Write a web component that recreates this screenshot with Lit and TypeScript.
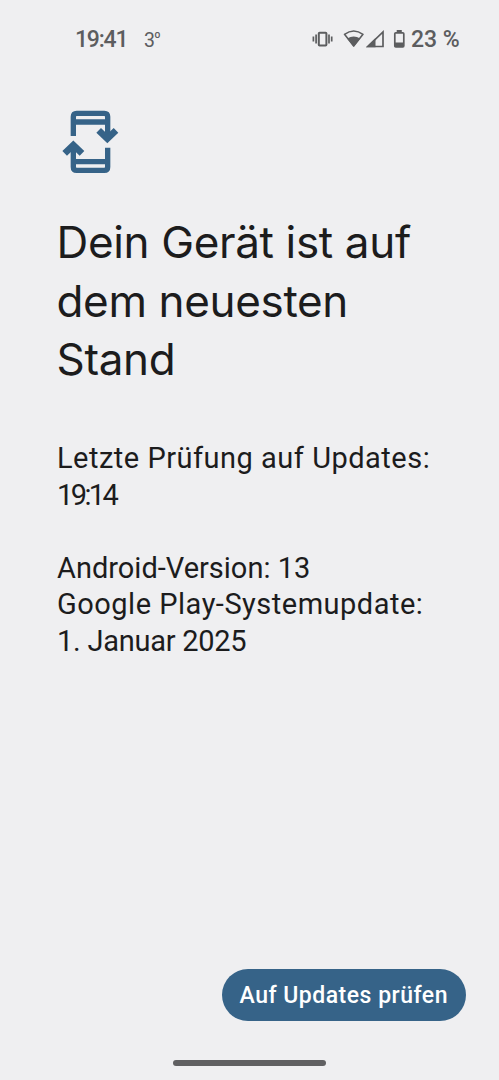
import { LitElement, html, css } from "lit";
import { customElement } from "lit/decorators.js";

@customElement("status-bar")
class StatusBar extends LitElement {
  static styles = css`
    :host {
      display: flex;
      align-items: center;
      height: 78px;
      box-sizing: border-box;
      padding: 2px 38px 0 75px;
      color: #5c5d5f;
      font-family: Roboto, sans-serif;
    }
    .clock { font-size: 23px; font-weight: 500; line-height: 28px; width: 69px; white-space: nowrap; letter-spacing: -1.2px; }
    .temp { font-size: 19.5px; font-weight: 400; line-height: 28px; flex: 1; padding-top: 1px; letter-spacing: -1px; }
    .temp sup { font-size: 15px; line-height: 0; vertical-align: 4px; }
    .icons { display: block; width: 96px; height: 28px; margin-top: -2px; }
    .battery { font-size: 23px; font-weight: 500; line-height: 28px; width: 50px; margin-left: 4px; white-space: nowrap; }
  `;
  render() {
    return html`
      <span class="clock">19:41</span>
      <span class="temp">3<sup>º</sup></span>
      <svg class="icons" viewBox="311 25 96 28" fill="none" stroke="#5c5d5f">
        <rect x="318.8" y="32.8" width="7.6" height="12.8" rx=".8" stroke-width="2" />
        <path d="M313.4 36.5v5M316.1 34.5v9M331.7 36.5v5M329 34.5v9" stroke-width="1.7" />
        <path d="M344.5 34.3Q353.7 27.6 363 34.3L353.7 46Z" stroke-width="1.6" stroke-linejoin="round" />
        <path d="M347.2 38.4Q353.7 34.5 360.2 38.4L353.7 46.8Z" fill="#5c5d5f" stroke="none" />
        <path d="M368 46.5H383V31.9Z" stroke-width="1.7" />
        <path d="M366 47.3L375.5 38V47.3Z" fill="#5c5d5f" stroke="none" />
        <rect x="394.8" y="32.8" width="9" height="14" rx="1" stroke-width="1.7" />
        <path d="M394.5 42.6H404V47H394.5ZM396.7 30H401.8V33H396.7Z" fill="#5c5d5f" stroke="none" />
      </svg>
      <span class="battery">23 %</span>
    `;
  }
}

@customElement("app-root")
class AppRoot extends LitElement {
  static styles = css`
    :host {
      display: flex;
      flex-direction: column;
      height: 1080px;
      overflow: hidden;
      background: #efeff1;
      color: #1c1c1d;
      font-family: Roboto, sans-serif;
    }
    main { flex: 1; padding: 22px 0 0 50px; }
    .logo { display: block; width: 80px; height: 85px; }
    h1 {
      margin: 28px 0 0 6.5px;
      font-family: Inter, sans-serif;
      font-size: 44px;
      font-weight: 400;
      line-height: 58.5px;
      letter-spacing: -0.35px;
    }
    .line { display: block; white-space: nowrap; }
    .info { margin: 51.5px 0 0 7px; font-size: 29px; line-height: 36.5px; }
    .info p { margin: 0 0 36.5px; }
    .wide { letter-spacing: 0.5px; }
    .time { letter-spacing: -2.6px; }
    .date { letter-spacing: -0.25px; }
    footer { display: flex; justify-content: flex-end; padding-right: 33.5px; }
    button {
      width: 243.5px;
      height: 51.5px;
      padding: 2px 0 0;
      border: 0;
      border-radius: 26px;
      background: #366388;
      color: #fff;
      font: 500 23px/50px Roboto, sans-serif;
      letter-spacing: 0.5px;
      white-space: nowrap;
    }
    .handle { width: 153px; height: 6px; margin: 39.5px 0 14px 173px; border-radius: 3px; background: #606062; }
  `;
  render() {
    return html`
      <status-bar></status-bar>
      <main>
        <svg class="logo" viewBox="0 0 240 255" fill="none" stroke="#366388" stroke-width="16">
          <path d="M70 108V50Q70 40 80 40H163Q173 40 173 50V106M70 66H173" />
          <path d="M146 91L172 116L198 91" stroke-width="20" />
          <path d="M157 104H187L172 124Z" fill="#366388" stroke="none" />
          <path d="M173 143V201Q173 211 163 211H80Q70 211 70 201V145M173 185H70" />
          <path d="M44 160L70 135L96 160" stroke-width="20" />
          <path d="M55 147H85L70 127Z" fill="#366388" stroke="none" />
        </svg>
        <h1>
          <span class="line">Dein Gerät ist auf</span>
          <span class="line">dem neuesten</span>
          <span class="line">Stand</span>
        </h1>
        <div class="info">
          <p>
            <span class="line wide">Letzte Prüfung auf Updates:</span>
            <span class="line time">19:14</span>
          </p>
          <p>
            <span class="line">Android-Version: 13</span>
            <span class="line wide">Google Play-Systemupdate:</span>
            <span class="line date">1. Januar 2025</span>
          </p>
        </div>
      </main>
      <footer><button>Auf Updates prüfen</button></footer>
      <div class="handle"></div>
    `;
  }
}
